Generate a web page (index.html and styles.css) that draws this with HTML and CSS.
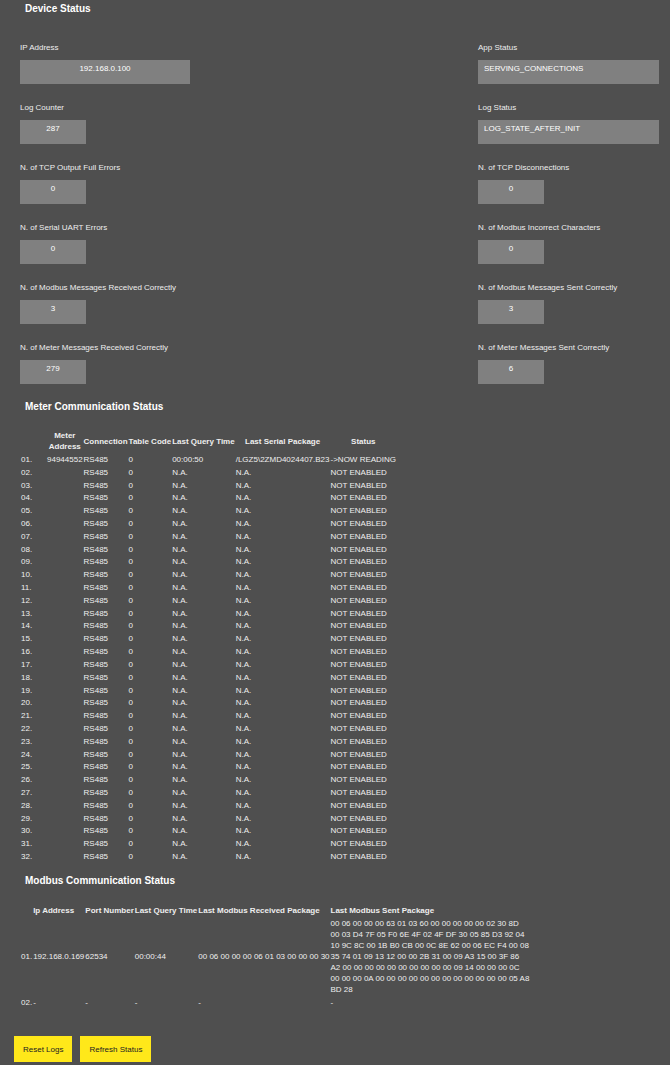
FILE: index.html
```html
<!DOCTYPE html>
<html lang="en">
<head>
    <meta charset="UTF-8">
    <meta name="viewport" content="width=device-width, initial-scale=1.0">
    <title>Device Status</title>
    <link rel="stylesheet" href="styles.css">
</head>
<body>
    <h2>Device Status</h2>

    <div class="fields">
        <div class="field">
            <label for="ip-address">IP Address</label>
            <input type="text" id="ip-address" class="medium" value="192.168.0.100" readonly>
        </div>
        <div class="field">
            <label for="app-status">App Status</label>
            <input type="text" id="app-status" class="wide" value="SERVING_CONNECTIONS" readonly>
        </div>
        <div class="field">
            <label for="log-counter">Log Counter</label>
            <input type="text" id="log-counter" value="287" readonly>
        </div>
        <div class="field">
            <label for="log-status">Log Status</label>
            <input type="text" id="log-status" class="wide" value="LOG_STATE_AFTER_INIT" readonly>
        </div>
        <div class="field">
            <label for="tcp-full">N. of TCP Output Full Errors</label>
            <input type="text" id="tcp-full" value="0" readonly>
        </div>
        <div class="field">
            <label for="tcp-disc">N. of TCP Disconnections</label>
            <input type="text" id="tcp-disc" value="0" readonly>
        </div>
        <div class="field">
            <label for="uart-errors">N. of Serial UART Errors</label>
            <input type="text" id="uart-errors" value="0" readonly>
        </div>
        <div class="field">
            <label for="modbus-incorrect">N. of Modbus Incorrect Characters</label>
            <input type="text" id="modbus-incorrect" value="0" readonly>
        </div>
        <div class="field">
            <label for="modbus-received">N. of Modbus Messages Received Correctly</label>
            <input type="text" id="modbus-received" value="3" readonly>
        </div>
        <div class="field">
            <label for="modbus-sent">N. of Modbus Messages Sent Correctly</label>
            <input type="text" id="modbus-sent" value="3" readonly>
        </div>
        <div class="field">
            <label for="meter-received">N. of Meter Messages Received Correctly</label>
            <input type="text" id="meter-received" value="279" readonly>
        </div>
        <div class="field">
            <label for="meter-sent">N. of Meter Messages Sent Correctly</label>
            <input type="text" id="meter-sent" value="6" readonly>
        </div>
    </div>

    <h2>Meter Communication Status</h2>

    <table class="meter-table">
        <thead>
            <tr>
                <th class="meter-index"></th>
                <th>Meter<br>Address</th>
                <th>Connection</th>
                <th>Table Code</th>
                <th>Last Query Time</th>
                <th>Last Serial Package</th>
                <th>Status</th>
            </tr>
        </thead>
        <tbody id="meter-rows"></tbody>
    </table>

    <h2>Modbus Communication Status</h2>

    <table class="modbus-table">
        <thead>
            <tr>
                <th></th>
                <th>Ip Address</th>
                <th>Port Number</th>
                <th>Last Query Time</th>
                <th>Last Modbus Received Package</th>
                <th>Last Modbus Sent Package</th>
            </tr>
        </thead>
        <tbody>
            <tr>
                <td>01.</td>
                <td>192.168.0.169</td>
                <td>62534</td>
                <td>00:00:44</td>
                <td>00 06 00 00 00 06 01 03 00 00 00 30</td>
                <td>
                    00 06 00 00 00 63 01 03 60 00 00 00 00 00 02 30 8D<br>
                    00 03 D4 7F 05 F0 6E 4F 02 4F DF 30 05 85 D3 92 04<br>
                    10 9C 8C 00 1B B0 CB 00 0C 8E 62 00 06 EC F4 00 08<br>
                    35 74 01 09 13 12 00 00 2B 31 00 09 A3 15 00 3F 86<br>
                    A2 00 00 00 00 00 00 00 00 00 00 09 14 00 00 00 0C<br>
                    00 00 00 0A 00 00 00 00 00 00 00 00 00 00 00 00 05 A8<br>
                    BD 28
                </td>
            </tr>
            <tr>
                <td>02.</td>
                <td>-</td>
                <td>-</td>
                <td>-</td>
                <td>-</td>
                <td>-</td>
            </tr>
        </tbody>
    </table>

    <div class="buttons">
        <button type="button">Reset Logs</button>
        <button type="button">Refresh Status</button>
    </div>

    <script>
        const METER_COUNT = 32;
        const meters = [];

        for (let i = 0; i < METER_COUNT; i++) {
            meters.push({ address: '', time: 'N.A.', serial: 'N.A.', status: 'NOT ENABLED' });
        }

        meters[0] = {
            address: '94944552',
            time: '00:00:50',
            serial: '/LGZ5\\2ZMD4024407.B23',
            status: '-&gt;NOW READING'
        };

        const meterRows = document.getElementById('meter-rows');

        meters.forEach((meter, index) => {
            const rowHTML = `
                <tr>
                    <td>${String(index + 1).padStart(2, '0')}.</td>
                    <td>${meter.address}</td>
                    <td>RS485</td>
                    <td>0</td>
                    <td>${meter.time}</td>
                    <td>${meter.serial}</td>
                    <td>${meter.status}</td>
                </tr>
            `;
            meterRows.insertAdjacentHTML('beforeend', rowHTML);
        });
    </script>
</body>
</html>
```

FILE: styles.css
```css
body {
    margin: 0;
    padding: 2px 11px 3px 20px;
    background-color: #4f4f4f;
    color: #eee;
    font-family: "Liberation Sans", Arial, sans-serif;
    font-size: 8px;
    line-height: 11px;
}

h2 {
    margin: 0;
    padding-left: 5px;
    color: #fff;
    font-size: 10px;
    line-height: 14px;
}

.fields {
    display: grid;
    grid-template-columns: 1fr 181px;
    row-gap: 18px;
    margin: 26px 0 16px;
}

label {
    display: block;
    margin-bottom: 7px;
}

input {
    display: block;
    box-sizing: border-box;
    width: 66px;
    height: 24px;
    padding: 0 6px 8px;
    border: none;
    background-color: #808080;
    color: #fff;
    font: inherit;
    text-align: center;
}

input.medium {
    width: 170px;
}

input.wide {
    width: 100%;
    text-align: left;
}

table {
    border-spacing: 1px 0;
    white-space: nowrap;
}

th, td {
    padding: 0;
    text-align: left;
}

.meter-table {
    height: 433px;
    margin: 16px 0 11px;
}

.meter-table th {
    padding-bottom: 1px;
    text-align: center;
}

.meter-index {
    width: 25px;
}

.modbus-table {
    margin: 17px 0 28px;
}

.modbus-table td {
    padding-top: 2px;
}

.buttons {
    display: flex;
    gap: 8px;
    margin-left: -6px;
}

button {
    height: 26px;
    padding: 0 9px;
    border: none;
    background-color: #ffe81a;
    color: #222;
    font: inherit;
    cursor: pointer;
}
```
